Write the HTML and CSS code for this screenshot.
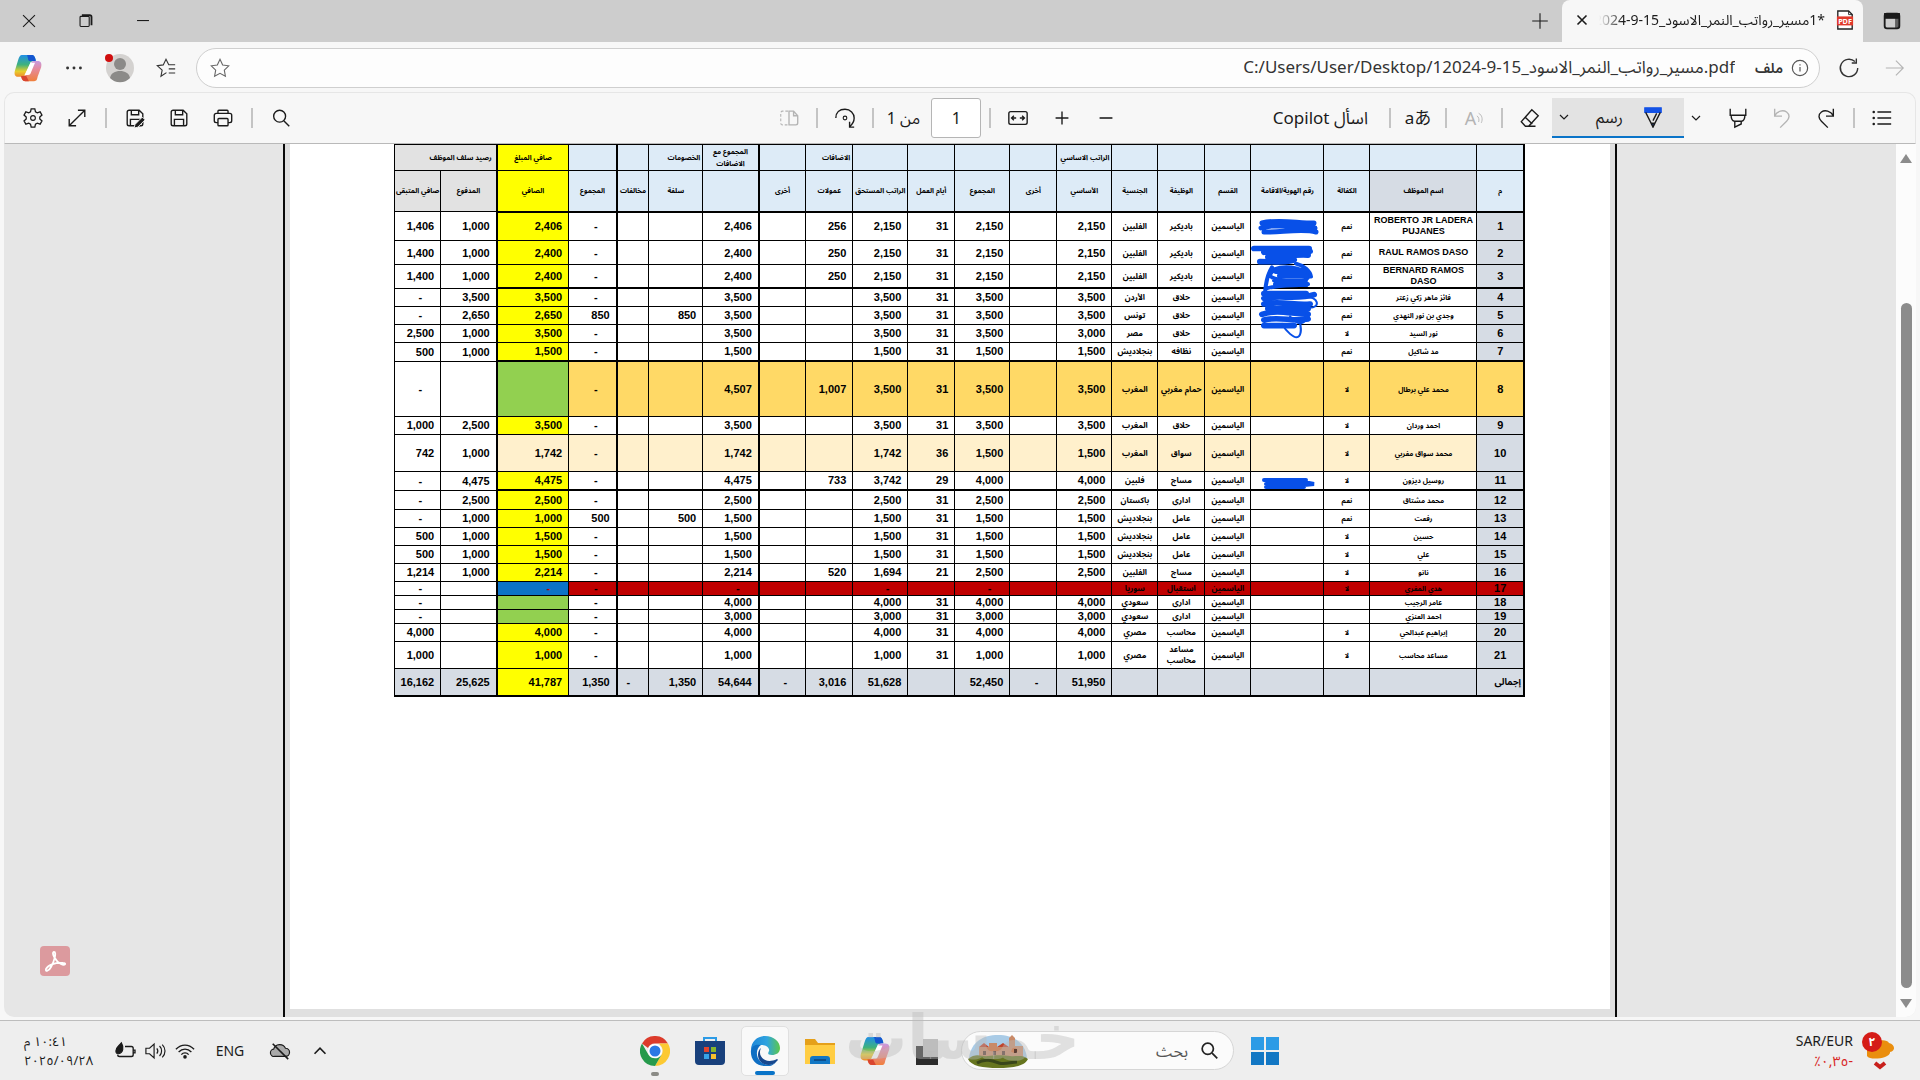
FILE: index.html
```html
<!DOCTYPE html>
<html lang="ar" dir="rtl">
<head>
<meta charset="utf-8">
<title>مسير رواتب</title>
<link rel="stylesheet" href="styles.css">
</head>
<body>
<svg class="defs" aria-hidden="true">
  <defs>
    <linearGradient id="cpA" x1="0" y1="0" x2="0" y2="1"><stop offset="0" stop-color="#1f8fe8"/><stop offset=".45" stop-color="#3fb27c"/><stop offset=".75" stop-color="#e6cf2c"/><stop offset="1" stop-color="#f08a2c"/></linearGradient>
    <linearGradient id="cpB" x1="0" y1="0" x2="0" y2="1"><stop offset="0" stop-color="#c79be0"/><stop offset=".4" stop-color="#e58a9c"/><stop offset="1" stop-color="#f0803c"/></linearGradient>
    <linearGradient id="edA" x1="0" y1="0" x2="1" y2="0"><stop offset="0" stop-color="#1d86d8"/><stop offset=".55" stop-color="#30a4e0"/><stop offset="1" stop-color="#5cc84a"/></linearGradient>
    <symbol id="copilot" viewBox="0 0 32 32">
      <path d="M9 1h11c3 0 4 2 5 6l-6 2-6 14c-1 2-2 3-4 3H5c-4 0-5-3-4-7L5 6c1-3 2-5 4-5z" fill="url(#cpA)"/>
      <path d="M15 1h5c3 0 4 2 5 7h-6c-2 0-3-1-3-3z" fill="#1456d0"/>
      <path d="M23 31H13c-3 0-4-2-5-5l6-2 5-12c1-3 2-4 4-4h4c4 0 5 3 4 7l-4 11c-.6 3-1 5-4 5z" fill="url(#cpB)"/>
      <path d="M19 10h5l-5 12c-.5 1-1 2-3 2h-4z" fill="#fff"/>
      <path d="M17 31h-4c-3 0-4-2-5-6h6z" fill="#d9452f"/>
    </symbol>
    <symbol id="chev" viewBox="0 0 12 12"><path d="M2 4l4 4 4-4" fill="none" stroke="currentColor" stroke-width="1.2"/></symbol>
    <symbol id="save" viewBox="0 0 24 24"><path d="M5.500 3.500h11l4 4v11a2 2 0 0 1-2 2h-13a2 2 0 0 1-2-2v-13a2 2 0 0 1 2-2zM8 3.500v5h8v-5M7 20.500v-7h10v7"/></symbol>
  </defs>
</svg>

<header class="tabs">
  <button class="cap" aria-label="قائمة علامات التبويب"><svg class="ic" viewBox="0 0 24 24"><rect x="4" y="4" width="16" height="16" rx="2.500" stroke-width="2"/><path d="M4 4h16v5H4z" fill="currentColor"/><path d="M16 8h4v11h-4z" fill="currentColor" opacity=".6"/></svg></button>
  <div class="tab">
    <svg class="pdf" viewBox="0 0 20 22"><path d="M2 1h12l4 4v16H2z" fill="#fff" stroke="#222" stroke-width="1.500"/><path d="M14 1v4h4" fill="none" stroke="#222"/><rect x="1" y="7" width="18" height="10" fill="#e0392b"/><text x="10" y="15" text-anchor="middle" font-size="8">PDF</text></svg>
    <span class="tab-title">*1مسير_رواتب_النمر_الاسود_15-9-2024.pdf</span>
    <button class="tab-x" aria-label="إغلاق"><svg viewBox="0 0 12 12"><path d="M1.500 1.500l9 9M10.500 1.500l-9 9"/></svg></button>
  </div>
  <button class="newtab" aria-label="علامة تبويب جديدة"><svg class="ic" viewBox="0 0 24 24"><path d="M12 3.500v17M3.500 12h17"/></svg></button>
  <div class="fill"></div>
  <button class="cap" aria-label="تصغير"><svg class="ic" viewBox="0 0 24 24"><path d="M5.500 11.500h13"/></svg></button>
  <button class="cap" aria-label="استعادة"><svg class="ic" viewBox="0 0 24 24"><rect x="5.500" y="7" width="10" height="11" rx="1"/><path d="M7.500 5.500h8.500a2 2 0 0 1 2 2v9" stroke-width="2"/></svg></button>
  <button class="cap" aria-label="إغلاق النافذة"><svg class="ic" viewBox="0 0 24 24"><path d="M5.500 5.500l13 13M18.500 5.500l-13 13"/></svg></button>
</header>

<nav class="address">
  <button class="nb dim" aria-label="التالي"><svg class="ic" viewBox="0 0 24 24"><path d="M2 12h19M13 4l8 8-8 8"/></svg></button>
  <button class="nb" aria-label="تحديث"><svg class="ic" viewBox="0 0 24 24"><path d="M21.500 12a9.500 9.500 0 1 1-3-7M20 1.500v5h-5" stroke-width="1.500"/></svg></button>
  <div class="url">
    <svg class="info" viewBox="0 0 20 20"><circle cx="10" cy="10" r="8.500"/><path d="M10 9v5M10 5.800v1.400"/></svg>
    <label for="url">ملف</label>
    <input id="url" dir="ltr" value="C:/Users/User/Desktop/1مسير_رواتب_النمر_الاسود_15-9-2024.pdf">
    <button class="nb fav" aria-label="إضافة إلى المفضلة"><svg class="ic" viewBox="0 0 24 24"><path d="M12 2.500l2.900 6.200 6.600.9-4.800 4.700 1.200 6.700L12 17.800 6.100 21l1.200-6.700L2.500 9.600l6.600-.9z"/></svg></button>
  </div>
  <button class="nb" aria-label="المفضلة"><svg class="ic" viewBox="0 0 24 24"><path d="M12.500 17l-6 4 1.300-6.700L2.500 9.500l6.500-.9 3-6.100 3 6h7M15 13h7M15 17.500h7"/></svg></button>
  <button class="nb" aria-label="الملف الشخصي"><svg class="avatar" viewBox="0 0 30 30"><circle cx="15" cy="15" r="14" fill="#d4d2d0"/><circle cx="15" cy="11" r="6" fill="#8b8a88"/><path d="M5 25c1-5 5-7 10-7s9 2 10 7a14 14 0 0 1-20 0z" fill="#8b8a88"/><circle cx="4" cy="5" r="4" fill="#d00f0f"/></svg></button>
  <button class="nb" aria-label="المزيد"><svg class="ic" viewBox="0 0 24 24"><g fill="currentColor" stroke="none"><circle cx="5" cy="12" r="1.600"/><circle cx="12" cy="12" r="1.600"/><circle cx="19" cy="12" r="1.600"/></g></svg></button>
  <button class="nb" aria-label="Copilot"><svg class="cp"><use href="#copilot"/></svg></button>
</nav>

<section class="toolbar">
  <div class="grp">
    <button class="tb" aria-label="المحتويات"><svg class="ic" viewBox="0 0 24 24"><path d="M7 5.500h15M7 12h15M7 18.500h15" stroke-width="1.600"/><g fill="currentColor" stroke="none"><circle cx="3" cy="5.500" r="1.400"/><circle cx="3" cy="12" r="1.400"/><circle cx="3" cy="18.500" r="1.400"/></g></svg></button>
    <i class="sep"></i>
    <button class="tb" aria-label="إعادة"><svg class="ic" viewBox="0 0 24 24"><path d="M20 2v8h-8M20 9.500C17 4.500 11 2.500 7 5.500s-3 7 0 10l7 7" stroke-width="1.500"/></svg></button>
    <button class="tb dim" aria-label="تراجع"><svg class="ic" viewBox="0 0 24 24"><path d="M4 2v8h8M4 9.500C7 4.500 13 2.500 17 5.500s3 7 0 10l-7 7" stroke-width="1.500"/></svg></button>
    <button class="tb" aria-label="تمييز"><svg class="ic" viewBox="0 0 24 24"><path d="M3.500 2v7h17V2M4.500 9c0 4 1 6 3.500 6.500h8c2.500-.5 3.500-2.500 3.500-6.500M8.500 15.500V22l7-3.500v-3" stroke-width="1.500"/></svg></button>
    <button class="mini" aria-label="خيارات التمييز"><svg class="cv"><use href="#chev"/></svg></button>
    <div class="draw">
      <button class="draw-b"><svg class="ic" viewBox="0 0 24 24"><path d="M3 2h18v5H3z" fill="#1352e6" stroke="#1352e6"/><path d="M4 7l6 12h4l6-12M10 19l2 4 2-4M16 8l-4 8" stroke-width="1.500"/><path d="M10.500 19h3L12 22z" fill="#1352e6"/></svg>رسم</button>
      <button class="mini2" aria-label="خيارات الرسم"><svg class="cv"><use href="#chev"/></svg></button>
    </div>
    <button class="tb" aria-label="ممحاة"><svg class="ic" viewBox="0 0 24 24"><path d="M14 3l7 6.500L10.500 21H7l-4.500-5zM6.500 11l8 7.500M10 21h8" stroke-width="1.500"/></svg></button>
    <i class="sep"></i>
    <button class="tb dim read" aria-label="القراءة بصوت عال"><span>A</span><svg viewBox="0 0 8 14"><path d="M1 4c2 1 3 4 2 7M3 1c4 2 5 7 3 11"/></svg></button>
    <i class="sep"></i>
    <button class="tb tr" aria-label="ترجمة">aあ</button>
    <i class="sep"></i>
    <button class="ask">اسأل Copilot</button>
  </div>
  <div class="grp mid">
    <button class="tb" aria-label="تصغير العرض"><svg class="ic" viewBox="0 0 24 24"><path d="M5 12h14" stroke-width="1.700"/></svg></button>
    <button class="tb" aria-label="تكبير العرض"><svg class="ic" viewBox="0 0 24 24"><path d="M12 5v14M5 12h14" stroke-width="1.500"/></svg></button>
    <button class="tb" aria-label="ملاءمة العرض"><svg class="ic" viewBox="0 0 24 24"><rect x="2" y="5" width="20" height="14" rx="2" stroke-width="1.500"/><path d="M5.500 12H10M7.500 9.500L5 12l2.500 2.500M18.500 12H14M16.500 9.500L19 12l-2.500 2.500" stroke-width="1.500"/></svg></button>
    <i class="sep"></i>
    <input class="pg" id="pg" value="1"><label for="pg" class="of">من 1</label>
    <i class="sep"></i>
    <button class="tb" aria-label="تدوير"><svg class="ic" viewBox="0 0 24 24"><path d="M2 12C2 6 6 2.500 12 2.500S22 7 22 12c0 4-2 7-5 9.500M17 16v6h5" stroke-width="1.500"/><circle cx="12" cy="12" r="2"/></svg></button>
    <i class="sep"></i>
    <button class="tb dim" aria-label="عرض الصفحة"><svg class="ic" viewBox="0 0 24 24"><path d="M11 4.500H5a2 2 0 0 0-2 2v11a2 2 0 0 0 2 2h6" stroke-dasharray="3 2"/><path d="M12 4.500h5l4.500 5v8a2 2 0 0 1-2 2H12zM17 4.500v5h4.500" stroke-width="1.500"/></svg></button>
  </div>
  <div class="grp end">
    <button class="tb" aria-label="بحث"><svg class="ic" viewBox="0 0 24 24"><circle cx="10.500" cy="10" r="6.500" stroke-width="1.500"/><path d="M15 15l6 6" stroke-width="1.500"/></svg></button>
    <i class="sep"></i>
    <button class="tb" aria-label="طباعة"><svg class="ic" viewBox="0 0 24 24"><path d="M6.500 7V4.500a1 1 0 0 1 1-1h9a1 1 0 0 1 1 1V7M6.500 17H4.500a2 2 0 0 1-2-2v-6a2 2 0 0 1 2-2h15a2 2 0 0 1 2 2v6a2 2 0 0 1-2 2h-2" stroke-width="1.500"/><rect x="6.500" y="12.500" width="11" height="8" rx="1" stroke-width="1.500"/></svg></button>
    <button class="tb" aria-label="حفظ"><svg class="ic t"><use href="#save"/></svg></button>
    <button class="tb" aria-label="حفظ باسم"><svg class="ic t" viewBox="0 0 24 24"><use href="#save" width="24" height="24"/><path d="M11 23l1-4 8-8 3 3-8 8z" fill="currentColor" stroke="#f7f7f7" stroke-width="1"/></svg></button>
    <i class="sep"></i>
    <button class="tb" aria-label="ملء الشاشة"><svg class="ic" viewBox="0 0 24 24"><path d="M3.500 20.500l17-17M13 3.500h7.500V11M3.500 13v7.500H11" stroke-width="1.500"/></svg></button>
    <button class="tb" aria-label="الإعدادات"><svg class="ic" viewBox="0 0 24 24"><path d="M10 2h4l.7 3.200 2 1.100 3.100-1 2 3.500-2.400 2.200v2l2.400 2.200-2 3.500-3.100-1-2 1.100L14 22h-4l-.7-3.200-2-1.100-3.100 1-2-3.500L4.600 13v-2L2.200 8.800l2-3.500 3.100 1 2-1.100z" stroke-width="1.400"/><circle cx="12" cy="12" r="2.600"/></svg></button>
  </div>
</section>

<main class="viewer">
  <div class="scroll"><b class="up"></b><span class="thumb"></span><b class="down"></b></div>
  <article class="page">
    <div class="paper">
      <div class="sheet">
        <table>
          <colgroup><col style="width:47px"><col style="width:107px"><col style="width:46px"><col style="width:73px"><col style="width:46px"><col style="width:47px"><col style="width:46px"><col style="width:55px"><col style="width:47px"><col style="width:55px"><col style="width:47px"><col style="width:55px"><col style="width:47px"><col style="width:47px"><col style="width:56px"><col style="width:54px"><col style="width:32px"><col style="width:48px"><col style="width:72px"><col style="width:56px"><col style="width:46px"></colgroup>
          <thead>
            <tr class="g1"><th><th><th><th><th><th><th><th class="s">الراتب الاساسي<th><th><th><th><th class="s">الاضافات<th><th>المجموع مع الاضافات<th class="s">الخصومات<th><th><th>صافي المبلغ<th colspan="2" class="s w">رصيد سلف الموظف</tr>
            <tr class="g2 cut"><th>م<th class="nm">اسم الموظف<th>الكفالة<th>رقم الهوية/الاقامة<th>القسم<th>الوظيفة<th>الجنسية<th>الأساسي<th>أخرى<th>المجموع<th>أيام العمل<th>الراتب المستحق<th>عمولات<th>أخرى<th><th>سلفة<th>مخالفات<th>المجموع<th>الصافي<th>المدفوع<th>صافي المتبقى</tr>
          </thead>
          <tbody>
            <tr class="h29"><td>1<td class="en">ROBERTO JR LADERA PUJANES<td>نعم<td><td>الياسمين<td>باديكير<td>الفلبين<td>2,150<td><td>2,150<td>31<td>2,150<td>256<td><td>2,406<td><td><td class="d">-<td>2,406<td>1,000<td>1,406</tr>
            <tr class="h24"><td>2<td class="en">RAUL RAMOS DASO<td>نعم<td><td>الياسمين<td>باديكير<td>الفلبين<td>2,150<td><td>2,150<td>31<td>2,150<td>250<td><td>2,400<td><td><td class="d">-<td>2,400<td>1,000<td>1,400</tr>
            <tr class="h23 cut"><td>3<td class="en">BERNARD RAMOS DASO<td>نعم<td><td>الياسمين<td>باديكير<td>الفلبين<td>2,150<td><td>2,150<td>31<td>2,150<td>250<td><td>2,400<td><td><td class="d">-<td>2,400<td>1,000<td>1,400</tr>
            <tr><td>4<td>فائز ماهر زكي زعتر<td>نعم<td><td>الياسمين<td>حلاق<td>الأردن<td>3,500<td><td>3,500<td>31<td>3,500<td><td><td>3,500<td><td><td class="d">-<td>3,500<td>3,500<td class="d">-</tr>
            <tr><td>5<td>وجدي بن نور النهدي<td>نعم<td><td>الياسمين<td>حلاق<td>تونس<td>3,500<td><td>3,500<td>31<td>3,500<td><td><td>3,500<td>850<td><td>850<td>2,650<td>2,650<td class="d">-</tr>
            <tr><td>6<td>نور السيد<td>لا<td><td>الياسمين<td>حلاق<td>مصر<td>3,000<td><td>3,500<td>31<td>3,500<td><td><td>3,500<td><td><td class="d">-<td>3,500<td>1,000<td>2,500</tr>
            <tr class="h19 cut"><td>7<td>مد شاكيل<td>نعم<td><td>الياسمين<td>نظافه<td>بنجلاديش<td>1,500<td><td>1,500<td>31<td>1,500<td><td><td>1,500<td><td><td class="d">-<td>1,500<td>1,000<td>500</tr>
            <tr class="h55 orange"><td>8<td>محمد علي برطال<td>لا<td><td>الياسمين<td class="nw">حمام مغربي<td>المغرب<td>3,500<td><td>3,500<td>31<td>3,500<td>1,007<td><td>4,507<td><td><td class="d">-<td class="green"><td><td class="d">-</tr>
            <tr><td>9<td>احمد وردان<td>لا<td><td>الياسمين<td>حلاق<td>المغرب<td>3,500<td><td>3,500<td>31<td>3,500<td><td><td>3,500<td><td><td class="d">-<td>3,500<td>2,500<td>1,000</tr>
            <tr class="h37 cream"><td>10<td>محمد سواق مغربي<td>لا<td><td>الياسمين<td>سواق<td>المغرب<td>1,500<td><td>1,500<td>36<td>1,742<td><td><td>1,742<td><td><td class="d">-<td>1,742<td>1,000<td>742</tr>
            <tr class="h19 cut"><td>11<td>روسيل ديزون<td>لا<td><td>الياسمين<td>مساج<td>فلبين<td>4,000<td><td>4,000<td>29<td>3,742<td>733<td><td>4,475<td><td><td class="d">-<td>4,475<td>4,475<td class="d">-</tr>
            <tr class="h19"><td>12<td>محمد مشتاق<td>نعم<td><td>الياسمين<td>ادارى<td>باكستان<td>2,500<td><td>2,500<td>31<td>2,500<td><td><td>2,500<td><td><td class="d">-<td>2,500<td>2,500<td class="d">-</tr>
            <tr><td>13<td>رفعت<td>نعم<td><td>الياسمين<td>عامل<td>بنجلاديش<td>1,500<td><td>1,500<td>31<td>1,500<td><td><td>1,500<td>500<td><td>500<td>1,000<td>1,000<td class="d">-</tr>
            <tr><td>14<td>حسين<td>لا<td><td>الياسمين<td>عامل<td>بنجلاديش<td>1,500<td><td>1,500<td>31<td>1,500<td><td><td>1,500<td><td><td class="d">-<td>1,500<td>1,000<td>500</tr>
            <tr><td>15<td>علي<td>لا<td><td>الياسمين<td>عامل<td>بنجلاديش<td>1,500<td><td>1,500<td>31<td>1,500<td><td><td>1,500<td><td><td class="d">-<td>1,500<td>1,000<td>500</tr>
            <tr><td>16<td>نانو<td>لا<td><td>الياسمين<td>مساج<td>الفلبين<td>2,500<td><td>2,500<td>21<td>1,694<td>520<td><td>2,214<td><td><td class="d">-<td>2,214<td>1,000<td>1,214</tr>
            <tr class="h14 red"><td>17<td>هدي المغري<td>لا<td><td>الياسمين<td>استقبال<td>سوريا<td><td><td class="d">-<td><td class="d">-<td><td><td class="d">-<td><td><td class="d">-<td class="d blue">-<td><td class="d">-</tr>
            <tr class="h14"><td>18<td>عامر الرجيب<td><td><td>الياسمين<td>ادارى<td>سعودي<td>4,000<td><td>4,000<td>31<td>4,000<td><td><td>4,000<td><td><td class="d">-<td class="green"><td><td class="d">-</tr>
            <tr class="h14"><td>19<td>احمد العنزي<td><td><td>الياسمين<td>ادارى<td>سعودي<td>3,000<td><td>3,000<td>31<td>3,000<td><td><td>3,000<td><td><td class="d">-<td class="green"><td><td class="d">-</tr>
            <tr><td>20<td>إبراهيم عبدالحي<td>لا<td><td>الياسمين<td>محاسب<td>مصري<td>4,000<td><td>4,000<td>31<td>4,000<td><td><td>4,000<td><td><td class="d">-<td>4,000<td><td>4,000</tr>
            <tr class="h27"><td>21<td>مساعد محاسب<td>لا<td><td>الياسمين<td>مساعد محاسب<td>مصري<td>1,000<td><td>1,000<td>31<td>1,000<td><td><td>1,000<td><td><td class="d">-<td>1,000<td><td>1,000</tr>
          </tbody>
          <tfoot>
            <tr class="h28"><td class="nw">إجمالى<td><td><td><td><td><td><td>51,950<td class="d">-<td>52,450<td><td>51,628<td>3,016<td class="d">-<td>54,644<td>1,350<td class="d">-<td>1,350<td>41,787<td>25,625<td>16,162</tr>
          </tfoot>
        </table>
        <svg class="ink" viewBox="0 0 80 360" aria-hidden="true">
          <path d="M12 82c15-4 35 0 52 0M11 87c18-6 36 2 54 0M14 91c14 1 38-4 52 0M13 85h50" stroke-width="5"/>
          <g transform="translate(0 6) scale(1 .94)">
            <path d="M4 108h55M14 112c15-3 32 2 46-1M18 117c12 0 28-3 40-2M10 122c16 0 30 1 34-2" stroke-width="6"/>
            <path d="M24 130c14-5 34 0 34 8s-40 4-38-2 12-8 22-4M24 142h32M18 150c14-4 32-2 40-4M22 128c-6 10-9 30-5 38M46 124c8 2 14 8 15 14" stroke-width="4"/>
            <path d="M14 156h42M14 161c14-4 34 2 50-4M14 167c16-4 32 2 46 0M18 172h40M12 178c16-6 30 0 46 0M14 184c14-4 30 2 44-1M14 190h30M26 132h28M30 137h26M26 146h30" stroke-width="6"/>
            <path d="M56 160c12-2 16 12 2 11M32 188c4 8 12 16 16 14s3-12 1-20M40 180c8 12 18 8 16-2" stroke-width="2"/>
          </g>
          <path d="M14 339h42M16 343h44M16 346h38M54 341l10 2-10 1" stroke-width="4"/>
        </svg>
      </div>
    </div>
  </article>
  <button class="acro" aria-label="Adobe Acrobat"><svg viewBox="0 0 30 30"><path d="M14 6c-3 0 1 9 7 12 4 2 6-1 2-1-7-1-15 2-17 6-1 3 3 2 5-2 3-5 6-15 3-15z" fill="none" stroke="#fff" stroke-width="1.800"/></svg></button>
</main>

<footer class="task">
  <div class="rates">
    <svg class="coin" viewBox="0 0 34 40"><path d="M6 16c8-8 20-8 22-4 6 1 7 8 1 9 1 6-20 9-23 4z" fill="#ea8e0e"/><path d="M14 32l5 4 5-4" fill="none" stroke="#c8201c" stroke-width="4"/><circle cx="11" cy="11" r="10" fill="#d51c17"/><text x="11" y="15" text-anchor="middle" font-size="12">٢</text></svg>
    <div><div>SAR/EUR</div><div class="neg"><bdo dir="ltr">٪٠,٣٥-</bdo></div></div>
  </div>
  <div class="apps">
    <button class="app" aria-label="ابدأ"><svg viewBox="0 0 30 30"><path d="M1 1h13v13H1zM16 1h13v13H16z" fill="#2c9be6"/><path d="M1 16h13v13H1zM16 16h13v13H16z" fill="#1277c4"/></svg></button>
    <div class="find">
      <svg class="mag" viewBox="0 0 22 22"><circle cx="9" cy="9" r="6.500"/><path d="M14 14l6 6"/></svg>
      <input placeholder="بحث" aria-label="بحث">
      <svg class="castle" viewBox="0 0 62 34"><path d="M2 24C4 8 16 1 31 1s27 7 29 23c0 8-58 8-58 0z" fill="#a9cbe6"/><path d="M12 13h10V9h8v4h12V4l3-3 3 3v8h8v14H12z" fill="#c98a68"/><path d="M12 13h10l-5-4zM30 13h12l-6-4z" fill="#c0442c"/><path d="M16 17h3v4h-3zM26 17h3v4h-3zM35 17h3v4h-3zM47 15h3v4h-3z" fill="#5d3e34"/><path d="M1 25c8-7 14-2 20-3s16-1 22 0 12-2 18 3c-3 7-15 9-30 9S4 32 1 25z" fill="#66751f"/><path d="M10 29c8-5 16-2 22 0s12-1 18-1" fill="none" stroke="#39461a" stroke-width="3"/></svg>
    </div>
    <button class="app" aria-label="عرض المهام"><svg viewBox="0 0 30 30"><path d="M1 10h7v11h15v8H1z" fill="#2b2b2b"/><path d="M8 3h15v18H8z" fill="#bdbdbd"/></svg></button>
    <button class="app" aria-label="Copilot"><svg><use href="#copilot"/></svg></button>
    <button class="app" aria-label="مستكشف الملفات"><svg viewBox="0 0 30 30"><path d="M0 3h10l3 4h17v6H0z" fill="#e5a01a"/><path d="M0 9h30v19H0z" fill="#ffcd43"/><path d="M5 28v-5a3 3 0 0 1 3-3h14a3 3 0 0 1 3 3v5z" fill="#1277c4"/><path d="M9 24h12" stroke="#0d4f8c" stroke-width="2"/></svg></button>
    <button class="app on" aria-label="Edge"><svg viewBox="0 0 30 30"><path d="M1 14C1 5 8 0 15 0c9 0 15 6 15 12 0 5-4 7-8 7-5 0-4-2-3-4s-2-6-7-6C7 9 2 11 1 14z" fill="url(#edA)"/><path d="M1 14c1-5 6-6 10-5-5 3-6 12 0 17 5 4 12 3 15 0-3 4-8 5-11 4C6 30 0 23 1 14z" fill="#0f6fc4"/><path d="M11 12c-4 8 4 17 16 11 1 0 1 1 0 2-4 5-12 5-16 1s-4-11 0-14z" fill="#17488f"/></svg></button>
    <button class="app" aria-label="المتجر"><svg viewBox="0 0 30 30"><path d="M9 6V2h12v4" fill="none" stroke="#2c9be6" stroke-width="2"/><path d="M0 5h30v20a4 4 0 0 1-4 4H4a4 4 0 0 1-4-4z" fill="#18407c"/><path d="M9 11h5v5H9z" fill="#e2432c"/><path d="M16 11h5v5h-5z" fill="#86b52d"/><path d="M9 18h5v5H9z" fill="#38a3e8"/><path d="M16 18h5v5h-5z" fill="#f5bf2e"/></svg></button>
    <button class="app run" aria-label="Chrome"><svg viewBox="0 0 30 30"><path d="M2 7.500a15 15 0 0 1 26 0H15a7.500 7.500 0 0 0-7 4.500z" fill="#dc3b2b"/><path d="M28 7.500A15 15 0 0 1 15 30l6.500-11.300A7.500 7.500 0 0 0 20 9l-1-1.500z" fill="#fcc932"/><path d="M2 7.500A15 15 0 0 0 15 30l6.500-11.300C18 24 11 23 8.500 18.700z" fill="#269a4c"/><circle cx="15" cy="15" r="7" fill="#fff"/><circle cx="15" cy="15" r="5.500" fill="#2a78e4"/></svg></button>
    <span class="mark">خمسات</span>
  </div>
  <div class="tray">
    <button class="ti" aria-label="الرموز المخفية"><svg viewBox="0 0 22 22"><path d="M5 14l6-6 6 6" stroke-width="1.800"/></svg></button>
    <button class="ti" aria-label="OneDrive"><svg viewBox="0 0 22 22"><path d="M5 17a4 4 0 0 1-1-8 7 7 0 0 1 13-1 4.500 4.500 0 0 1 0 9z" fill="#aaa"/><path d="M3 3l17 17" stroke-width="1.800"/></svg></button>
    <button class="lang">ENG</button>
    <button class="ti sm" aria-label="الشبكة"><svg viewBox="0 0 22 22"><path d="M1 9c6-6 14-6 20 0M4 12c4-4 10-4 14 0M7 15c2-2.500 6-2.500 8 0" stroke-width="1.500"/><circle cx="11" cy="17.500" r="2" fill="currentColor" stroke="none"/></svg></button>
    <button class="ti sm" aria-label="الصوت"><svg viewBox="0 0 22 22"><path d="M1 8h4l5-4.500v15L5 14H1zM13 8c1.500 2 1.500 4 0 6M16 5.500c3 3 3 8 0 11M19 4c4 4 4 10 0 14"/></svg></button>
    <button class="ti sm" aria-label="البطارية"><svg viewBox="0 0 22 22"><path d="M11 6h7a2 2 0 0 1 2 2v7a2 2 0 0 1-2 2H5a2 2 0 0 1-2-2M20 10h2v3h-2" stroke-width="1.500"/><path d="M1 11c0-4 3-5 6-9 3 5 2 11-3 12-2 0-3-1-3-3z" fill="currentColor"/></svg></button>
    <div class="clock"><div dir="rtl">١٠:٤١ م</div><div><bdo dir="ltr">٢٠٢٥/٠٩/٢٨</bdo></div></div>
  </div>
</footer>
</body>
</html>
```
FILE: styles.css
```css
* { box-sizing: border-box; }
html, body { height: 100%; }
body {
  margin: 0;
  display: flex;
  flex-direction: column;
  background: #f7f7f7;
  color: #1b1b1b;
  font: 16px/20px "Noto Sans", "Noto Sans Arabic", "DejaVu Sans", "Noto Sans CJK JP", sans-serif;
  overflow: hidden;
}
button, input { font: inherit; color: inherit; border: 0; padding: 0; margin: 0; background: none; }
button { display: flex; align-items: center; justify-content: center; flex: none; }
input { outline: 0; min-width: 0; }
svg { display: block; flex: none; }
.defs { position: absolute; width: 0; height: 0; }
.ic { width: 22px; height: 22px; fill: none; stroke: currentColor; stroke-width: 1.2; }
.ic.t { stroke-width: 1.5; }
.dim { color: #b4b4b4; }
.fill { flex: 1; }

/* tab strip */
.tabs { display: flex; height: 42px; background: #cdcdcd; flex: none; }
.cap { width: 57px; }
.tab { width: 301px; display: flex; align-items: center; gap: 11px; padding: 0 9px 2px 14px; background: #f7f7f7; border-radius: 8px 8px 0 0; }
.pdf { width: 18px; height: 22px; }
.pdf text, .coin text { fill: #fff; font-weight: bold; }
.tab-title { flex: 1; font-size: 14px; white-space: nowrap; overflow: hidden; -webkit-mask-image: linear-gradient(to right, transparent, #000 24px); mask-image: linear-gradient(to right, transparent, #000 24px); }
.tab-x svg { width: 12px; height: 12px; stroke: currentColor; stroke-width: 1.6; }
.newtab { width: 44px; }

/* address bar */
.address { display: flex; align-items: center; height: 50px; padding: 2px 2px 0 5px; flex: none; color: #333; }
.nb { width: 46px; height: 40px; }
.nb.dim { color: #b4b4b4; }
.url { flex: 1; display: flex; align-items: center; height: 40px; margin: 0 6px 0 7px; padding: 0 10px 0 0; border: 1px solid #cfcfcf; border-radius: 20px; background: #fdfdfd; }
.info { width: 18px; height: 18px; fill: none; stroke: #555; stroke-width: 1.3; }
.url label { margin: 0 8px 0 20px; font-size: 14px; font-weight: 600; color: #333; }
.url input { flex: 1; text-align: right; font-size: 17px; height: 30px; }
.fav { color: #666; }
.avatar { width: 30px; height: 30px; overflow: visible; }
.cp { width: 28px; height: 28px; }

/* document toolbar */
.toolbar { display: grid; grid-template-columns: 1fr auto 1fr; align-items: center; height: 52px; margin: 0 4px; padding: 0 11px 0 6px; border: 1px solid #e6e6e6; border-bottom-color: #b9b9b9; border-radius: 10px 10px 0 0; flex: none; }
.grp { display: flex; align-items: center; }
.end { justify-content: flex-end; }
.mid { padding-right: 20px; }
.tb { width: 44px; height: 40px; }
.sep { width: 2px; height: 20px; margin: 0 5px; background: #c4c4c4; flex: none; }
.end .sep { margin: 0 6px; }
.cv { width: 12px; height: 12px; }
.mini { width: 24px; height: 40px; margin-right: 8px; }
.draw { display: flex; width: 132px; height: 40px; background: #e3e3e3; border-bottom: 2px solid #0a74c8; }
.draw-b { flex: 1; gap: 19px; }
.mini2 { width: 24px; }
.read { font-size: 18px; direction: ltr; align-items: center; }
.read svg { width: 7px; height: 13px; fill: none; stroke: currentColor; }
.tr { font-size: 17px; direction: ltr; }
.ask { padding: 0 16px; font-size: 17px; }
.pg { width: 50px; height: 40px; margin: 0 3px; text-align: center; background: #fff; border: 1px solid #b5b5b5; border-radius: 3px; }
.of { padding: 0 8px; }

/* document area */
.viewer { position: relative; flex: 1; min-height: 0; display: flex; margin: 0 4px 3px; background: #e6e6e6; border-radius: 0 0 10px 10px; overflow: hidden; }
.scroll { flex: none; width: 20px; display: flex; flex-direction: column; align-items: center; padding: 10px 0 9px; background: #fcfcfc; }
.up, .down { border: 6px solid transparent; flex: none; width: 0; height: 0; }
.up { border-top: 0; border-bottom: 9px solid #8c8c8c; }
.down { border-bottom: 0; border-top: 9px solid #8c8c8c; }
.thumb { flex: 1; width: 11px; margin: 140px 0 11px; border-radius: 6px; background: #8c8c8c; }
.page { flex: 1; min-width: 0; display: flex; margin: 0 279px; padding: 0 5px 8px; border: solid #0a0a0a; border-width: 0 2px; background: #e0e0e0; }
.paper { flex: 1; min-width: 0; background: #fff; padding: 0 85px 0 104px; }
.sheet { position: relative; }
.ink { position: absolute; top: -3px; right: 195px; width: 80px; height: 360px; fill: none; stroke: #0850e8; stroke-linecap: round; }
.acro { position: absolute; left: 36px; bottom: 41px; width: 30px; height: 30px; border-radius: 4px; background: #dc9a9e; }
.acro svg { width: 30px; height: 30px; }

table { width: 100%; table-layout: fixed; border-collapse: collapse; border: 1px solid #000; border-right-width: 2px; border-bottom-width: 2px; font: bold 8px/11px "Liberation Sans", "Noto Sans Arabic", "Noto Naskh Arabic", "Noto Kufi Arabic", sans-serif; color: #000; }
th, td { border: 1px solid #000; padding: 0; text-align: center; overflow: visible; }
th { background: #ddebf7; font-size: 7px; line-height: 12px; }
td { padding-top: 1px; height: inherit; }
tr { height: 18px; }
.g1 { height: 26px; }
.g2 { height: 41px; }
.h14 { height: 14px; }
.h19 { height: 19px; }
.h23 { height: 23px; }
.h24 { height: 24px; }
.h27 { height: 27px; }
.h28 { height: 28px; }
.h29 { height: 29px; }
.h37 { height: 37px; }
.h55 { height: 55px; }
.s { text-align: right; white-space: nowrap; padding-right: 2px; }
.w { padding-right: 4px; }
th:nth-child(19) { background: #ff0; }
th:nth-child(n+20) { background: #e2e2e2; }
.nm { background: #d6dce4; }
.g2 th { white-space: nowrap; }
th:nth-child(15), td:nth-child(15), th:nth-child(18), td:nth-child(18), th:nth-child(20), td:nth-child(20) { border-right-width: 2px; }
th:nth-child(14), td:nth-child(14), th:nth-child(17), td:nth-child(17), th:nth-child(19), td:nth-child(19) { border-left-width: 2px; }
td:nth-child(1) { background: #d6dce4; font-size: 11px; }
td:nth-child(2), td:nth-child(3) { font-size: 7px; }
td:nth-child(n+8) { font-size: 11px; text-align: right; padding-right: 6px; direction: ltr; }
td.d { padding-right: 18px; }
td:nth-child(19) { background: #ff0; }
td.en { font-size: 9px; direction: ltr; padding: 0; }
.nw { white-space: nowrap; }
.cut > :nth-child(-n+19) { border-bottom-width: 2px; }
.orange td:nth-child(-n+18) { background: #ffd966; }
.cream td:nth-child(n+2):nth-child(-n+19) { background: #fff0cc; }
.red td:nth-child(-n+18) { background: #c00000; }
tbody td.green { background: #92d050; }
.red td.blue { background: #0c73c7; color: #c00000; }
tfoot td { background: #d6dce4; }
tfoot td:nth-child(1) { font-size: 9px; text-align: right; padding-right: 2px; }
tfoot td:nth-child(19) { background: #ff0; }

/* taskbar */
.task { position: relative; display: grid; grid-template-columns: 1fr auto 1fr; align-items: center; height: 60px; border-top: 1px solid #bdbdbd; background: #eee; flex: none; font-size: 14px; line-height: 20px; }
.rates { display: flex; align-items: center; gap: 8px; padding-right: 25px; text-align: right; }
.rates > div { direction: ltr; }
.coin { width: 34px; height: 40px; }
.neg { color: #d8251f; }
.apps { position: relative; display: flex; align-items: center; gap: 7px; }
.app { position: relative; width: 48px; height: 50px; border-radius: 5px; }
.app svg { width: 30px; height: 30px; }
.app.on { background: #f9f9f9; border: 1px solid #e0e0e0; }
.app.on::after, .app.run::after { content: ""; position: absolute; bottom: 0; width: 20px; height: 4px; border-radius: 2px; background: #0a74c8; }
.app.run::after { width: 8px; background: #8a8a85; }
.find { display: flex; align-items: center; width: 273px; height: 39px; padding: 0 14px 0 5px; border: 1px solid #d6d6d6; border-radius: 20px; background: #fbfbfb; }
.mag { width: 19px; height: 19px; fill: none; stroke: #222; stroke-width: 2; }
.find input { flex: 1; padding-right: 12px; font-size: 16px; color: #555; }
.find input::placeholder { color: #555; opacity: 1; }
.castle { width: 62px; height: 34px; }
.mark { position: absolute; left: 214px; top: -20px; font: bold 62px/64px "DejaVu Sans", sans-serif; color: rgba(185, 185, 185, .42); pointer-events: none; }
.tray { display: flex; align-items: center; justify-content: flex-end; padding-left: 24px; }
.ti { width: 40px; height: 40px; }
.ti.sm { width: 30px; }
.ti svg { width: 20px; height: 20px; fill: none; stroke: currentColor; stroke-width: 1.3; overflow: visible; }
.lang { width: 60px; }
.clock { width: 86px; direction: ltr; text-align: left; font-size: 13px; line-height: 19px; }
.clock > div { text-align: left; }
```
